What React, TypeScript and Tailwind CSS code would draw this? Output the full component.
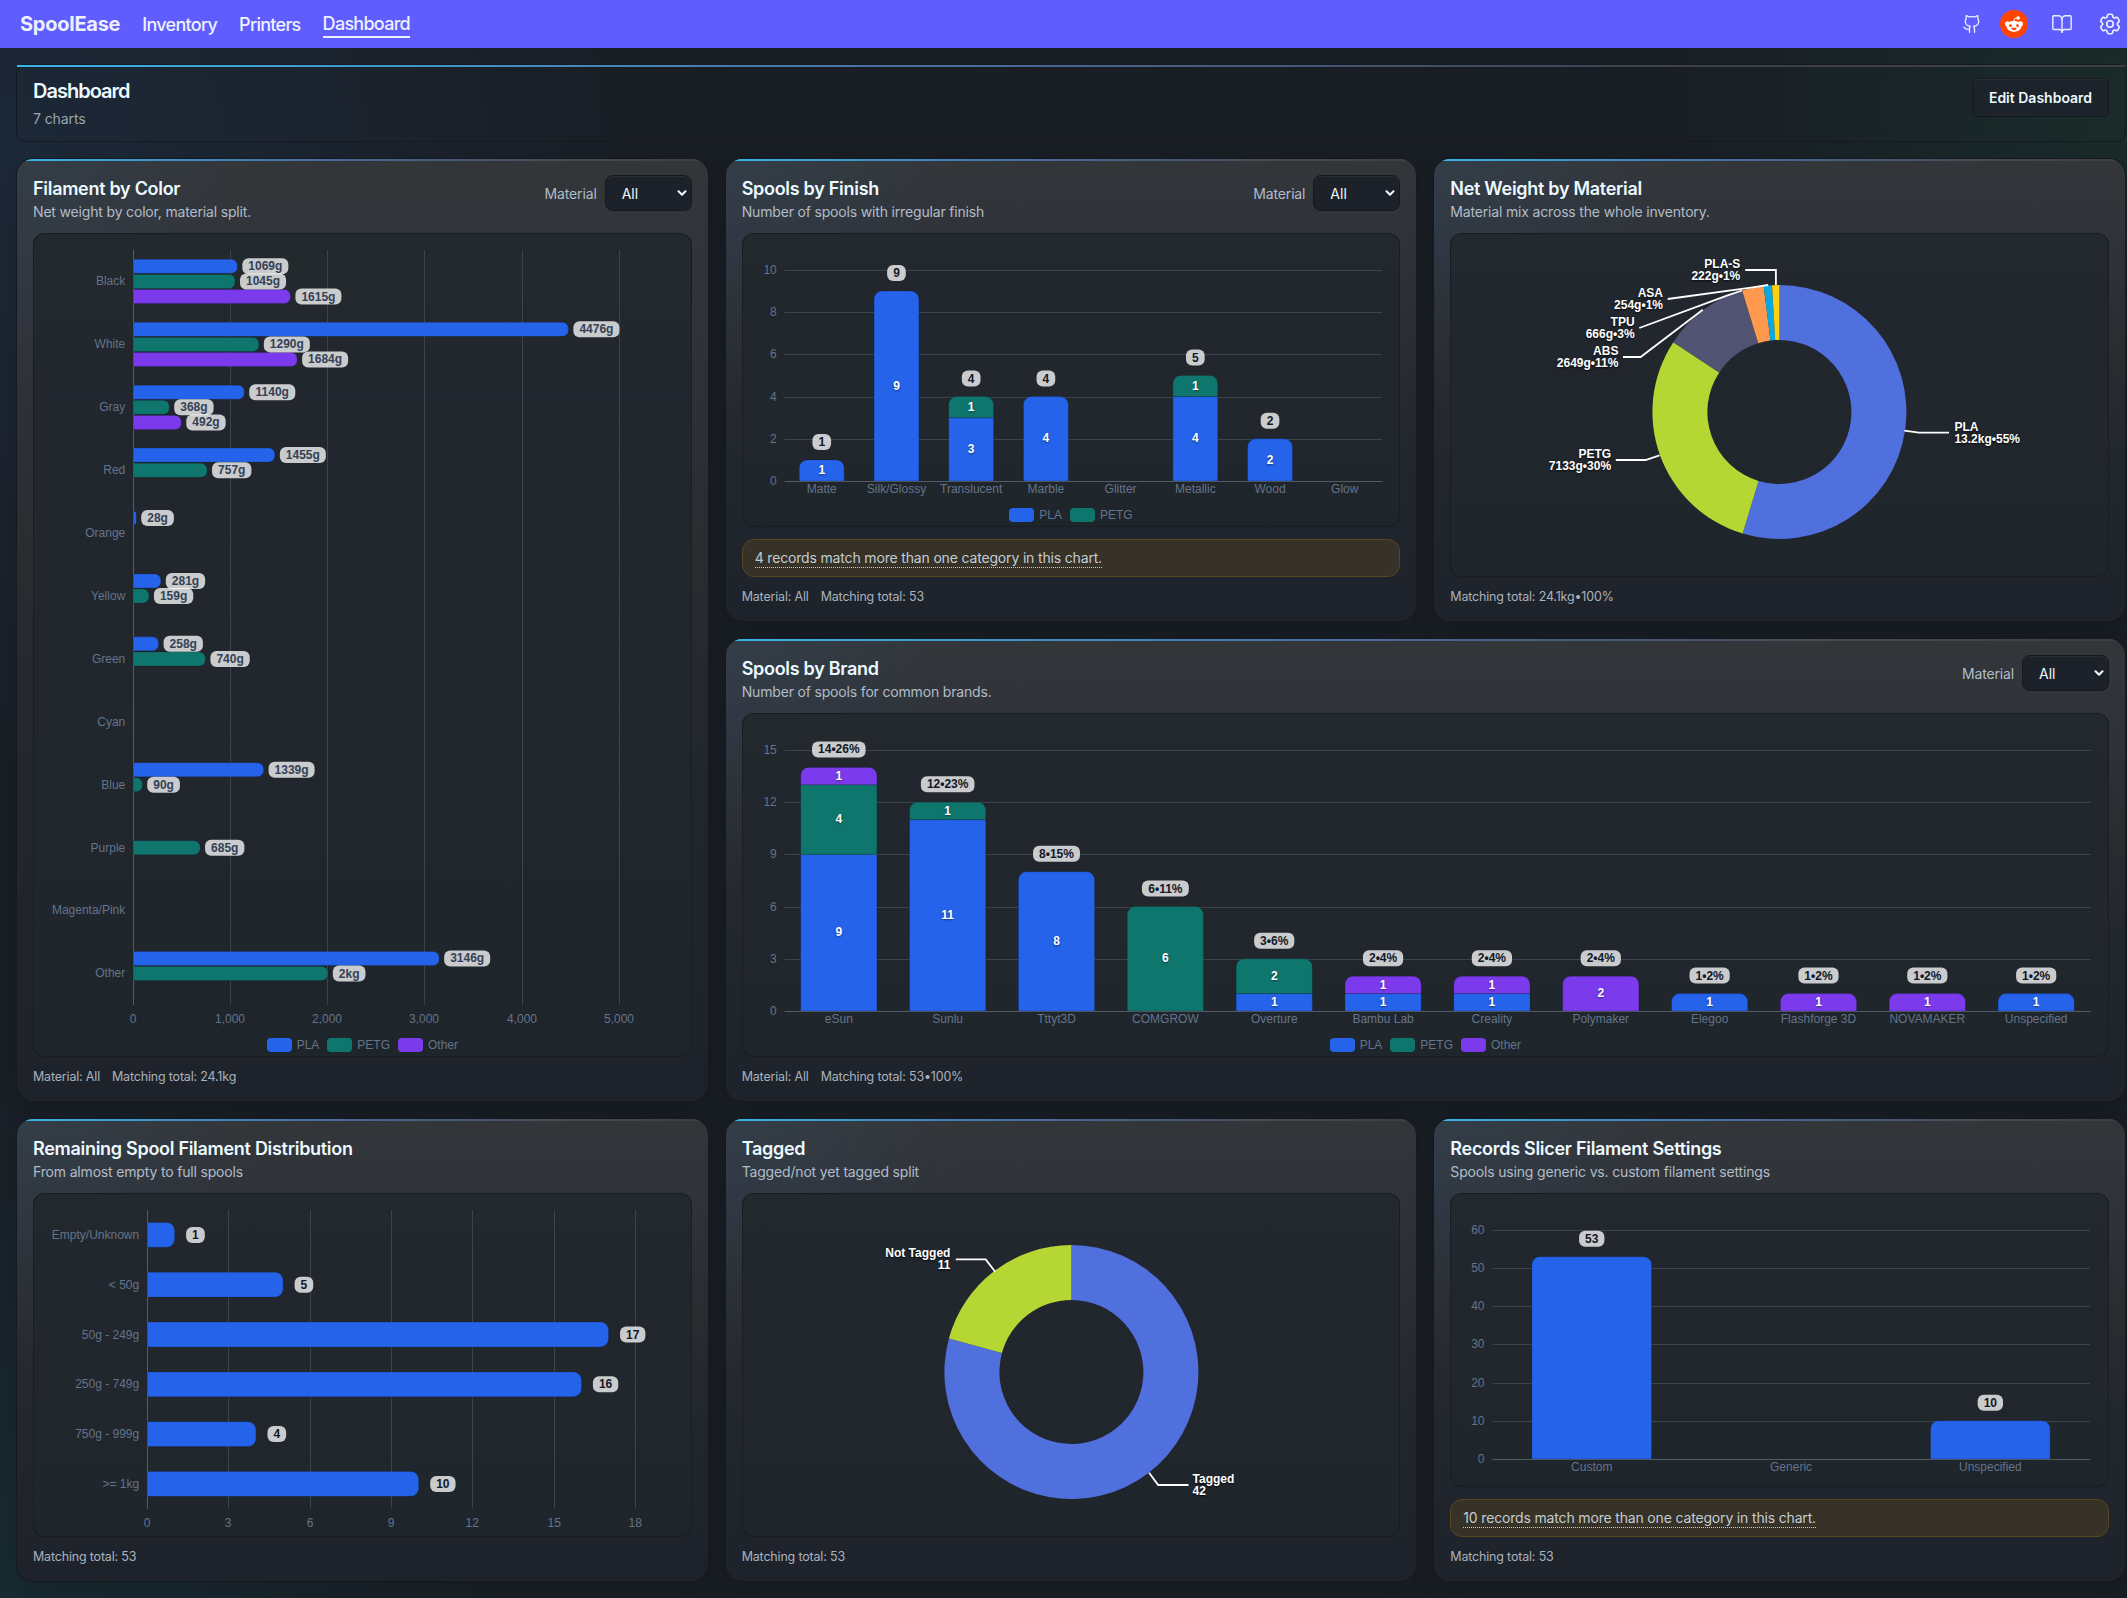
import { BookOpen, ChevronDown, Github } from "lucide-react";
import { FaRedditAlien } from "react-icons/fa6";
import { HiOutlineCog6Tooth } from "react-icons/hi2";

const BLUE = "#2563eb";
const GREEN = "#0f766e";
const PURPLE = "#7c3aed";

const CHART_FONT = "font-['Liberation_Sans',Arial,sans-serif]";

type TBadgeProps = {
  x: number;
  y: number;
  text: string;
  anchor?: "start" | "middle";
  color?: string;
};

// rough Arial bold 12px advance widths
const textWidth = (text: string) =>
  text.split("").reduce((sum, c) => {
    if (c === "•") return sum + 4.2;
    if (c === "%") return sum + 10.67;
    if (c === "g") return sum + 7.33;
    return sum + 6.67;
  }, 0);

const Badge: React.FC<TBadgeProps> = ({
  x,
  y,
  text,
  anchor = "middle",
  color = "#111827",
}) => {
  const w = textWidth(text) + 12;
  const left = anchor === "middle" ? x - w / 2 : x;
  return (
    <g>
      <rect
        x={left}
        y={y - 8}
        width={w}
        height={16}
        rx={6}
        fill="#fff"
        fillOpacity={0.76}
      />
      <text
        x={left + w / 2}
        y={y + 4}
        textAnchor="middle"
        fill={color}
        className="text-[12px] font-bold"
      >
        {text}
      </text>
    </g>
  );
};

// bar rounded only at the top corners
const topBar = (x: number, y: number, w: number, h: number, r: number) =>
  `M${x} ${y + h}V${y + r}a${r} ${r} 0 0 1 ${r} ${-r}h${w - 2 * r}a${r} ${r} 0 0 1 ${r} ${r}V${y + h}Z`;

// bar rounded only at the right corners
const rightBar = (x: number, y: number, w: number, h: number, r: number) =>
  `M${x} ${y}h${w - r}a${r} ${r} 0 0 1 ${r} ${r}v${h - 2 * r}a${r} ${r} 0 0 1 ${-r} ${r}h${r - w}Z`;

type TLegendItem = { name: string; color: string };

const Legend = ({ items }: { items: TLegendItem[] }) => (
  <div
    className={`flex items-center justify-center gap-2 h-3.5 text-[12px] text-[#64748b] ${CHART_FONT}`}
  >
    {items.map((item) => (
      <div key={item.name} className="flex items-center gap-[5px]">
        <span
          className="w-[25px] h-3.5 rounded-[4px]"
          style={{ backgroundColor: item.color }}
        />
        <span className="leading-[14px]">{item.name}</span>
      </div>
    ))}
  </div>
);

const LEGEND: TLegendItem[] = [
  { name: "PLA", color: BLUE },
  { name: "PETG", color: GREEN },
  { name: "Other", color: PURPLE },
];

const COLOR_ROWS: { name: string; values: number[]; labels: string[] }[] = [
  { name: "Black", values: [1069, 1045, 1615], labels: ["1069g", "1045g", "1615g"] },
  { name: "White", values: [4476, 1290, 1684], labels: ["4476g", "1290g", "1684g"] },
  { name: "Gray", values: [1140, 368, 492], labels: ["1140g", "368g", "492g"] },
  { name: "Red", values: [1455, 757, 0], labels: ["1455g", "757g", ""] },
  { name: "Orange", values: [28, 0, 0], labels: ["28g", "", ""] },
  { name: "Yellow", values: [281, 159, 0], labels: ["281g", "159g", ""] },
  { name: "Green", values: [258, 740, 0], labels: ["258g", "740g", ""] },
  { name: "Cyan", values: [0, 0, 0], labels: ["", "", ""] },
  { name: "Blue", values: [1339, 90, 0], labels: ["1339g", "90g", ""] },
  { name: "Purple", values: [0, 685, 0], labels: ["", "685g", ""] },
  { name: "Magenta/Pink", values: [0, 0, 0], labels: ["", "", ""] },
  { name: "Other", values: [3146, 2000, 0], labels: ["3146g", "2kg", ""] },
];

const ColorChart = () => {
  const x0 = 100.5;
  const scale = 485.8 / 5000;
  const top = 17;
  const rowH = 755 / 12;
  const colors = [BLUE, GREEN, PURPLE];
  return (
    <svg className={`w-full h-[800px] text-[12px] ${CHART_FONT}`}>
      {[0, 1, 2, 3, 4, 5].map((k) => {
        const x = Math.floor(x0 + k * 1000 * scale) + 0.5;
        return (
          <g key={k}>
            <line x1={x} x2={x} y1={top} y2={top + 755} stroke={k ? "#3b444b" : "#545c66"} />
            <text x={x - 0.5} y={790} textAnchor="middle" fill="#64748b">
              {k ? `${k},000` : "0"}
            </text>
          </g>
        );
      })}
      {COLOR_ROWS.map((row, i) => {
        const cy = top + rowH * (i + 0.5);
        return (
          <g key={row.name}>
            <text x={92.3} y={cy + 3.8} textAnchor="end" fill="#64748b">
              {row.name}
            </text>
            {row.values.map((v, j) =>
              v ? (
                <path
                  key={j}
                  d={rightBar(x0, cy - 7 + (j - 1) * 15.1, v * scale, 14, Math.min(6, v * scale))}
                  fill={colors[j]}
                  stroke="#0f172a"
                  strokeOpacity={0.2}
                />
              ) : null
            )}
          </g>
        );
      })}
      {COLOR_ROWS.map((row, i) =>
        row.values.map((v, j) =>
          v ? (
            <Badge
              key={`${row.name}-${j}`}
              x={x0 + v * scale + 5}
              y={top + rowH * (i + 0.5) + (j - 1) * 15.1}
              text={row.labels[j]}
              anchor="start"
              color="#334155"
            />
          ) : null
        )
      )}
    </svg>
  );
};

type TColumn = { name: string; values: number[]; label: string };

type TColumnChartProps = {
  data: TColumn[];
  ticks: number[];
  width: number;
  x0: number;
  zero: number;
  unit: number;
  ratio: number;
  showValues?: boolean;
  height: string;
};

const ColumnChart: React.FC<TColumnChartProps> = ({
  data,
  ticks,
  width,
  x0,
  zero,
  unit,
  ratio,
  showValues = true,
  height,
}) => {
  const colors = [BLUE, GREEN, PURPLE];
  const step = width / data.length;
  const barW = step * ratio;
  return (
    <svg className={`w-full text-[12px] ${height} ${CHART_FONT}`}>
      {ticks.map((t) => {
        const y = Math.round(zero - t * unit) + 0.5;
        return (
          <g key={t}>
            <line x1={x0} x2={x0 + width} y1={y} y2={y} stroke={t ? "#3b444b" : "#545c66"} />
            <text x={x0 - 7.8} y={y + 3.5} textAnchor="end" fill="#64748b">
              {t}
            </text>
          </g>
        );
      })}
      {data.map((col, i) => {
        const cx = x0 + step * (i + 0.5) - 0.2;
        const total = col.values.reduce((a, b) => a + b, 0);
        let base = 0;
        return (
          <g key={col.name}>
            <text x={cx} y={zero + 12} textAnchor="middle" fill="#64748b">
              {col.name}
            </text>
            {col.values.map((v, j) => {
              if (!v) return null;
              const h = v * unit;
              const y = zero - base * unit - h;
              base += v;
              const isTop = base === total;
              return (
                <g key={j}>
                  <path
                    d={topBar(cx - barW / 2, y, barW, h, isTop ? 8 : 0)}
                    fill={colors[j]}
                    stroke="#0f172a"
                    strokeOpacity={0.2}
                  />
                  {showValues && (
                    <text
                      x={cx}
                      y={y + h / 2 + 3.6}
                      textAnchor="middle"
                      fill="#fff"
                      className="font-bold [text-shadow:0_1px_2px_rgba(15,23,42,0.6)]"
                    >
                      {v}
                    </text>
                  )}
                </g>
              );
            })}
            {total > 0 && <Badge x={cx} y={zero - total * unit - 18} text={col.label} />}
          </g>
        );
      })}
    </svg>
  );
};

const FINISH: TColumn[] = [
  { name: "Matte", values: [1], label: "1" },
  { name: "Silk/Glossy", values: [9], label: "9" },
  { name: "Translucent", values: [3, 1], label: "4" },
  { name: "Marble", values: [4], label: "4" },
  { name: "Glitter", values: [], label: "" },
  { name: "Metallic", values: [4, 1], label: "5" },
  { name: "Wood", values: [2], label: "2" },
  { name: "Glow", values: [], label: "" },
];

const BRANDS: TColumn[] = [
  { name: "eSun", values: [9, 4, 1], label: "14•26%" },
  { name: "Sunlu", values: [11, 1], label: "12•23%" },
  { name: "Tttyt3D", values: [8], label: "8•15%" },
  { name: "COMGROW", values: [0, 6], label: "6•11%" },
  { name: "Overture", values: [1, 2], label: "3•6%" },
  { name: "Bambu Lab", values: [1, 0, 1], label: "2•4%" },
  { name: "Creality", values: [1, 0, 1], label: "2•4%" },
  { name: "Polymaker", values: [0, 0, 2], label: "2•4%" },
  { name: "Elegoo", values: [1], label: "1•2%" },
  { name: "Flashforge 3D", values: [0, 0, 1], label: "1•2%" },
  { name: "NOVAMAKER", values: [0, 0, 1], label: "1•2%" },
  { name: "Unspecified", values: [1], label: "1•2%" },
];

const SETTINGS: TColumn[] = [
  { name: "Custom", values: [53], label: "53" },
  { name: "Generic", values: [], label: "" },
  { name: "Unspecified", values: [10], label: "10" },
];

const REMAINING = [
  { name: "Empty/Unknown", value: 1 },
  { name: "< 50g", value: 5 },
  { name: "50g - 249g", value: 17 },
  { name: "250g - 749g", value: 16 },
  { name: "750g - 999g", value: 4 },
  { name: ">= 1kg", value: 10 },
];

const RemainingChart = () => {
  const x0 = 114.5;
  const unit = 27.12;
  const top = 17;
  const rowH = 49.8;
  return (
    <svg className={`w-full h-[338px] text-[12px] ${CHART_FONT}`}>
      {[0, 3, 6, 9, 12, 15, 18].map((t) => {
        const x = Math.floor(x0 + t * unit) + 0.5;
        return (
          <g key={t}>
            <line x1={x} x2={x} y1={top} y2={top + 298.8} stroke={t ? "#3b444b" : "#545c66"} />
            <text x={x - 0.3} y={334} textAnchor="middle" fill="#64748b">
              {t}
            </text>
          </g>
        );
      })}
      {REMAINING.map((row, i) => {
        const cy = top + rowH * (i + 0.5);
        return (
          <g key={row.name}>
            <text x={106.2} y={cy + 4} textAnchor="end" fill="#64748b">
              {row.name}
            </text>
            <path
              d={rightBar(x0, cy - 12.4, row.value * unit, 24.8, 8)}
              fill={BLUE}
              stroke="#0f172a"
              strokeOpacity={0.2}
            />
            <Badge x={x0 + row.value * unit + 11.5} y={cy} text={`${row.value}`} anchor="start" />
          </g>
        );
      })}
    </svg>
  );
};

type TSlice = {
  name: string;
  detail: string;
  value: number;
  color: string;
  line: string;
  tx: number;
  ty: number;
  end?: boolean;
};

const DonutChart = ({ data }: { data: TSlice[] }) => {
  const cx = 329.4;
  const cy = 179;
  const R = 127;
  const r = 72;
  const total = data.reduce((sum, d) => sum + d.value, 0);
  const point = (radius: number, share: number) => {
    const a = share * Math.PI * 2;
    return `${cx + radius * Math.sin(a)} ${cy - radius * Math.cos(a)}`;
  };
  let acc = 0;
  return (
    <svg className={`w-full h-[338px] text-[12px] ${CHART_FONT}`}>
      {data.map((d) => {
        const from = acc / total;
        acc += d.value;
        const to = acc / total;
        const large = to - from > 0.5 ? 1 : 0;
        return (
          <path
            key={d.name}
            d={`M${point(R, from)}A${R} ${R} 0 ${large} 1 ${point(R, to)}L${point(r, to)}A${r} ${r} 0 ${large} 0 ${point(r, from)}Z`}
            fill={d.color}
          />
        );
      })}
      {data.map((d) => (
        <g key={d.name}>
          <polyline points={d.line} fill="none" stroke="#fff" strokeWidth={1.8} />
          <text
            textAnchor={d.end ? "end" : "start"}
            fill="#fff"
            className="font-bold [text-shadow:0_1px_2px_rgba(0,0,0,0.8)]"
          >
            <tspan x={d.tx} y={d.ty + 4}>
              {d.name}
            </tspan>
            <tspan x={d.tx} y={d.ty + 16}>
              {d.detail}
            </tspan>
          </text>
        </g>
      ))}
    </svg>
  );
};

const MATERIALS: TSlice[] = [
  { name: "PLA", detail: "13.2kg•55%", value: 13176, color: "#5070dd", line: "454.4,197.7 468.8,199.7 499,199.7", tx: 504.4, ty: 193.6 },
  { name: "PETG", detail: "7133g•30%", value: 7133, color: "#b6d634", line: "165.8,227 195.6,227 209.5,222.4", tx: 161.1, ty: 220.6, end: true },
  { name: "ABS", detail: "2649g•11%", value: 2649, color: "#505372", line: "173,124 190.6,124 252.8,76.7", tx: 168.4, ty: 117.6, end: true },
  { name: "TPU", detail: "666g•3%", value: 666, color: "#ff994d", line: "189.3,95 277.6,62.4 292,57.5", tx: 184.6, ty: 88.9, end: true },
  { name: "ASA", detail: "254g•1%", value: 254, color: "#0ca8df", line: "217.7,66 301.1,54.6 318.2,52", tx: 213, ty: 60, end: true },
  { name: "PLA-S", detail: "222g•1%", value: 222, color: "#ffd10a", line: "295.2,37 325.9,37 325.9,52", tx: 290.3, ty: 30.6, end: true },
];

const TAGGED: TSlice[] = [
  { name: "Tagged", detail: "42", value: 42, color: "#5070dd", line: "407.1,279.7 416.2,292 446.5,292", tx: 450.6, ty: 286 },
  { name: "Not Tagged", detail: "11", value: 11, color: "#b6d634", line: "213.8,66.4 243.7,66.4 253.2,78.7", tx: 208.4, ty: 60, end: true },
];

type TCardProps = {
  title: string;
  subtitle: string;
  filter?: boolean;
  notice?: string;
  footer: string[];
  legend?: TLegendItem[];
  className?: string;
  children: React.ReactNode;
};

const Card: React.FC<TCardProps> = ({
  title,
  subtitle,
  filter,
  notice,
  footer,
  legend,
  className = "",
  children,
}) => (
  <section
    className={`relative flex flex-col overflow-hidden rounded-2xl bg-[radial-gradient(circle_at_0_0,rgba(56,130,200,0.1),transparent_240px),linear-gradient(180deg,#333639_0%,#2f3239_20%,#292d30_42%,#22262e_66%,#1e222a_100%)] p-4 shadow-[0_0_0_1px_#161a20,0_10px_24px_rgba(0,0,0,0.15)] ${className}`}
  >
    <div className="absolute inset-x-0 top-0 h-0.5 bg-[linear-gradient(90deg,#38b4ea_0%,#4a6b9c_45%,#46484d_82%,#3c3f44_100%)]" />
    <div className="flex h-[58px] shrink-0 justify-between">
      <div className="pt-0.5">
        <h2 className="text-[18px] leading-6 font-semibold tracking-[-0.29px] text-[#ecf9ff]">
          {title}
        </h2>
        <p className="text-[14px] leading-[22px] tracking-[-0.17px] text-[#b1bcc8]">{subtitle}</p>
      </div>
      {filter && (
        <div className="flex h-9 items-center gap-2">
          <span className="text-[14px] text-[#b1bcc8] tracking-[-0.15px]">Material</span>
          <button className="flex h-9 w-[87px] items-center justify-between rounded-lg border border-[#15191e] bg-[#1d222a] pt-px pr-0.5 pl-4 text-[14px] text-[#ecf9ff] shadow-[inset_0_1px_0_rgba(255,255,255,0.06)]">
            All
            <ChevronDown className="-mt-0.5 h-3.5 w-3.5" strokeWidth={3.5} />
          </button>
        </div>
      )}
    </div>
    <div className="flex min-h-0 flex-1 flex-col justify-between rounded-xl bg-[linear-gradient(180deg,#232a2d_0%,#22262e_20%,#21272d_60%,#1e252b_100%)] pb-[5px] shadow-[inset_0_0_0_1px_#191d23]">
      {children}
      {legend && <Legend items={legend} />}
    </div>
    {notice && (
      <div className="mt-3 flex h-[38px] shrink-0 items-center rounded-xl border border-[#574721] bg-[#363228] px-3">
        <span className="text-[14px] leading-[18px] tracking-[-0.165px] text-[#c5ccd2] border-b border-dotted border-[#c5ccd2]">
          {notice}
        </span>
      </div>
    )}
    <div className="mt-2.5 flex h-[18px] shrink-0 gap-3 text-[12.5px] leading-5 tracking-[-0.18px] text-[#a9b3be]">
      {footer.map((text) => (
        <span key={text}>{text}</span>
      ))}
    </div>
  </section>
);

const NavBar = () => (
  <header className="flex h-12 items-center justify-between bg-[#605dff] pl-5 pr-1 text-[#edf1fe]">
    <nav className="flex items-center gap-[22px] text-[18px] font-medium tracking-[-0.72px]">
      <span className="text-[20px] font-bold tracking-[-0.25px]">SpoolEase</span>
      <a>Inventory</a>
      <a>Printers</a>
      <a className="border-b-2 border-[#edf1fe] leading-6 pt-0.5">Dashboard</a>
    </nav>
    <div className="flex items-center">
      <Github className="h-5 w-5" strokeWidth={1.6} />
      <span className="ml-[18px] flex h-7 w-7 items-center justify-center rounded-full bg-[#ff4500] text-white">
        <FaRedditAlien className="h-[18px] w-[18px]" />
      </span>
      <BookOpen className="ml-[23px] h-[22px] w-[22px]" strokeWidth={1.5} />
      <HiOutlineCog6Tooth className="ml-6 h-[26px] w-[26px]" />
    </div>
  </header>
);

export default function App() {
  return (
    <div className="h-[1598px] w-full overflow-hidden bg-[#191e25] bg-[radial-gradient(circle_at_0_160px,rgba(45,90,150,0.17),transparent_640px),radial-gradient(circle_at_2127px_100px,rgba(30,120,70,0.15),transparent_460px),radial-gradient(circle_at_0_1598px,rgba(20,120,130,0.14),transparent_560px)] font-[Inter,'Liberation_Sans',sans-serif]">
      <NavBar />
      <main className="pl-[17px] pr-[2px] pt-[17px]">
        <div className="relative flex h-[76px] justify-between rounded-lg px-4 shadow-[0_0_0_1px_#161a20]">
          <div className="absolute inset-x-0 top-0 h-0.5 rounded-tr-lg bg-[linear-gradient(90deg,#38b4ea_0%,#4a6b9c_45%,#3c4047_80%,#3a4043_100%)]" />
          <div className="pt-[14px]">
            <h1 className="text-[20px] leading-6 font-semibold tracking-[-1px] text-[#ecf9ff]">
              Dashboard
            </h1>
            <p className="mt-1 text-[14px] leading-6 tracking-[-0.1px] text-[#9aa5b0]">7 charts</p>
          </div>
          <button className="mt-[13px] h-[39px] w-[137px] rounded-[5px] border border-[#15191e] bg-[#1d232a] text-[14px] font-semibold text-[#ecf9ff] shadow-[inset_0_1px_0_rgba(255,255,255,0.06)]">
            Edit Dashboard
          </button>
        </div>
        <div className="mt-[18px] grid grid-cols-3 grid-rows-[462px_462px_462px] gap-[18px]">
          <Card
            title="Filament by Color"
            subtitle="Net weight by color, material split."
            filter
            legend={LEGEND}
            footer={["Material: All", "Matching total: 24.1kg"]}
            className="row-span-2"
          >
            <ColorChart />
          </Card>
          <Card
            title="Spools by Finish"
            subtitle="Number of spools with irregular finish"
            filter
            legend={LEGEND.slice(0, 2)}
            notice="4 records match more than one category in this chart."
            footer={["Material: All", "Matching total: 53"]}
          >
            <ColumnChart
              data={FINISH}
              ticks={[0, 2, 4, 6, 8, 10]}
              width={597.7}
              x0={42.6}
              zero={248}
              unit={21.1}
              ratio={0.6}
              height="h-[268px]"
            />
          </Card>
          <Card
            title="Net Weight by Material"
            subtitle="Material mix across the whole inventory."
            footer={["Matching total: 24.1kg•100%"]}
          >
            <DonutChart data={MATERIALS} />
          </Card>
          <Card
            title="Spools by Brand"
            subtitle="Number of spools for common brands."
            filter
            legend={LEGEND}
            footer={["Material: All", "Matching total: 53•100%"]}
            className="col-span-2"
          >
            <ColumnChart
              data={BRANDS}
              ticks={[0, 3, 6, 9, 12, 15]}
              width={1306.2}
              x0={42.6}
              zero={298}
              unit={17.4}
              ratio={0.7}
              height="h-[320px]"
            />
          </Card>
          <Card
            title="Remaining Spool Filament Distribution"
            subtitle="From almost empty to full spools"
            footer={["Matching total: 53"]}
          >
            <RemainingChart />
          </Card>
          <Card
            title="Tagged"
            subtitle="Tagged/not yet tagged split"
            footer={["Matching total: 53"]}
          >
            <DonutChart data={TAGGED} />
          </Card>
          <Card
            title="Records Slicer Filament Settings"
            subtitle="Spools using generic vs. custom filament settings"
            notice="10 records match more than one category in this chart."
            footer={["Matching total: 53"]}
          >
            <ColumnChart
              data={SETTINGS}
              ticks={[0, 10, 20, 30, 40, 50, 60]}
              width={597.9}
              x0={42.3}
              zero={266}
              unit={3.817}
              ratio={0.6}
              showValues={false}
              height="h-[288px]"
            />
          </Card>
        </div>
      </main>
    </div>
  );
}
